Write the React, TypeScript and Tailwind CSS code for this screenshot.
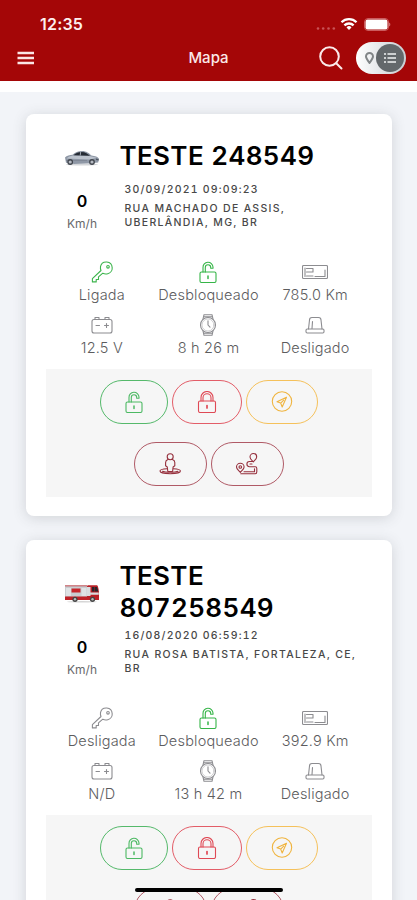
import type { ReactNode } from "react";

type Vehicle = {
  name: string;
  kind: "car" | "truck";
  speed: number;
  date: string;
  address: string;
  ignition: boolean;
  odometer: string;
  battery: string;
  hours: string;
};

const vehicles: Vehicle[] = [
  {
    name: "TESTE 248549",
    kind: "car",
    speed: 0,
    date: "30/09/2021 09:09:23",
    address: "RUA MACHADO DE ASSIS, UBERLÂNDIA, MG, BR",
    ignition: true,
    odometer: "785.0 Km",
    battery: "12.5 V",
    hours: "8 h 26 m",
  },
  {
    name: "TESTE 807258549",
    kind: "truck",
    speed: 0,
    date: "16/08/2020 06:59:12",
    address: "RUA ROSA BATISTA, FORTALEZA, CE, BR",
    ignition: false,
    odometer: "392.9 Km",
    battery: "N/D",
    hours: "13 h 42 m",
  },
];

function Icon({ children, className = "" }: { children: ReactNode; className?: string }) {
  return (
    <svg
      width={26}
      height={22}
      viewBox="0 0 26 22"
      fill="none"
      stroke="currentColor"
      strokeWidth={1.1}
      strokeLinecap="round"
      strokeLinejoin="round"
      className={className}
    >
      {children}
    </svg>
  );
}

function KeyIcon({ className }: { className?: string }) {
  return (
    <Icon className={className}>
      <path d="M12 9.500 3.400 17.600v3.300h3.800v-2.400h2.300v-2.600l4.300-3.700c1.300.7 3.300.9 5 .5 2.600-.6 4.600-3.200 4.400-6C23 3.400 20.800 1.200 17.800 1c-3.200-.2-5.800 1.800-6.300 4.700-.2 1.400 0 2.700.5 3.800Z" />
      <circle cx="19" cy="5.800" r="1.300" />
    </Icon>
  );
}

function UnlockIcon({ className }: { className?: string }) {
  return (
    <Icon className={className}>
      <rect x="5" y="11" width="16" height="10.500" rx="1.500" />
      <path d="M8 11V6.500a5 5 0 0 1 10-.5v1.300h-2.300V6.500a2.700 2.700 0 0 0-5.400 0V11" />
      <path d="M13 15v2.500" strokeWidth="1.500" />
    </Icon>
  );
}

function LockIcon() {
  return (
    <Icon>
      <rect x="4.500" y="10" width="17" height="11.500" rx="1.500" />
      <path d="M7 10V6.500a6 6 0 0 1 12 0V10M9 10V6.800a4 4 0 0 1 8 0V10" />
      <path d="M13 14.500v2.500" strokeWidth="1.700" />
    </Icon>
  );
}

function OdometerIcon() {
  return (
    <Icon>
      <rect x=".5" y="4.500" width="25" height="13" rx="1" />
      <path d="M3 7v8.500M4.500 7.500h6.500v3.500H4.500M4.500 15h6.500M13 15.500h10V9" />
    </Icon>
  );
}

function BatteryIcon() {
  return (
    <Icon>
      <rect x="3" y="5.500" width="20" height="13.500" rx="2" />
      <path d="M6 5.500v-2h4v2M16 5.500v-2h4v2M7 11.500h3.500M15.500 11.500h4M17.500 9.500v4" />
    </Icon>
  );
}

function WatchIcon() {
  return (
    <Icon>
      <circle cx="13" cy="11" r="7.500" />
      <circle cx="13" cy="11" r="6" strokeWidth=".4" />
      <path d="M8 5 9 .7h8L18 5M8 17l1 4.300h8l1-4.300M9 2.700h8M9 19.300h8M13 6.800V11l2 2.200" />
    </Icon>
  );
}

function SirenIcon() {
  return (
    <Icon>
      <path d="M6.500 15 7.500 6a2.500 2.500 0 0 1 2.500-2.500h6.500A2.500 2.500 0 0 1 19 6l1 9M10 14.500l.5-7" />
      <rect x="4" y="15" width="18" height="4" rx="1.200" />
    </Icon>
  );
}

function NavigateIcon() {
  return (
    <Icon>
      <circle cx="13" cy="10.500" r="9.700" />
      <path d="m17.500 6.300-9.500 4.500 3.700 1.300 1.500 3.900 4.300-9.700Zm-5.800 5.800 3-3" />
    </Icon>
  );
}

function StreetViewIcon() {
  return (
    <Icon>
      <circle cx="13.200" cy="3.800" r="3" />
      <path d="M11 6.500C9.300 7 8.600 8 8.600 9.500v3.300l1.700 1.200.5 4.500h4.800l.5-4.500 1.700-1.200V9.500c0-1.500-.7-2.500-2.400-3" />
      <path d="M10 15.800c-4 .2-7 .9-7 2.200 0 1.400 4.500 2.700 10.200 2.700s10.200-1.300 10.200-2.700c0-1.300-3-2-7-2.200" />
      <path d="M5.500 18.300c3 1.300 12.500 1.300 15.500 0" />
    </Icon>
  );
}

function RouteIcon() {
  return (
    <Icon>
      <path d="M6.300 19.500C4 16.900 2.500 15.800 2.500 14a3.800 3.800 0 0 1 7.600 0c0 1.800-1.500 2.900-3.800 5.500Z" />
      <circle cx="6.300" cy="14" r="1.300" />
      <path d="M19.300 8.800c-2-2-3.300-3-3.300-4.900a3.300 3.300 0 0 1 6.700 0c0 1.900-1.400 2.900-3.400 4.900Z" />
      <path d="M18.500 8.500h-3a2.600 2.600 0 0 0 0 5.200h5.800c1 0 1.500.7 1.500 1.700v3.300c0 1.200-.5 2-1.500 2H6.800M18 11h-2M10 18.800h10.500v-3" />
    </Icon>
  );
}

function Car() {
  return (
    <svg width={36} height={18} viewBox="0 0 36 18">
      <ellipse cx="18" cy="15.500" rx="16" ry="1" fill="#d5d7da" />
      <path d="M1 8.500C2.500 6.500 6 6.300 8.500 5.800 11 3.300 14 2 18 2c4.500 0 7 2.300 9.500 4.500 3.500.6 6.500 1.300 7.500 3.300l-.8 3.700-7 .8-17 .7L2 13.800 1 8.500Z" fill="#8f98a6" />
      <path d="M9 6.500 25 7l8 1.800-7.500 1.700-23-1C4 7.800 6.500 7.200 9 6.500Z" fill="#bcc3cd" />
      <path d="M9.500 6.200C12 3.800 14.500 2.900 17.500 2.900c4 0 6.300 1.800 8.500 3.900L9.500 6.200Z" fill="#252b34" />
      <path d="m16.700 2.900-.5 3.600" stroke="#aeb5bf" strokeWidth=".9" />
      <path d="M2 11.500h21" stroke="#757e8c" strokeWidth=".6" />
      <circle cx="6.200" cy="13" r="2.900" fill="#40454d" />
      <circle cx="6.200" cy="13" r="1.600" fill="#b6bbc3" />
      <circle cx="28" cy="13" r="2.900" fill="#40454d" />
      <circle cx="28" cy="13" r="1.600" fill="#b6bbc3" />
      <path d="m32 9.500 2.700.7v1.400L32 11Z" fill="#505864" />
    </svg>
  );
}

function FireTruck() {
  return (
    <svg width={36} height={18} viewBox="0 0 36 18">
      <ellipse cx="18" cy="16.700" rx="15" ry=".8" fill="#d5d5d5" />
      <path d="M1 .5h22V14H1z" fill="#c9cdd0" />
      <path d="M1 .5h22v.7H1zM1 11.500h34V15H1z" fill="#bf2228" />
      <path d="M7.500 3.500h9v4h-9z" fill="#c8272c" />
      <path d="M2 3h5v8H2zM17.500 3h5v8h-5z" fill="#dfe2e4" />
      <path d="M23 1.500c0-.8.700-1.200 1.500-1.200H33c1 0 1.800 4.700 2 7.500v4.500H23V1.500Z" fill="#b91f26" />
      <path d="M23 2h3.500v9H23zM26 7.500h8.800v2.300H26z" fill="#d9dcde" />
      <path d="M28 2h2.500v4.500H28zM31 2h2l1.300 4.600H31z" fill="#29272d" />
      <circle cx="11" cy="14.300" r="2.600" fill="#444" />
      <circle cx="11" cy="14.300" r="1.200" fill="#bbb" />
      <circle cx="28.500" cy="14.300" r="2.600" fill="#444" />
      <circle cx="28.500" cy="14.300" r="1.200" fill="#bbb" />
    </svg>
  );
}

function Stat({ icon, label }: { icon: ReactNode; label: string }) {
  return (
    <div className="flex flex-col items-center text-[#8c8c90]">
      {icon}
      <span className="mt-[3px] whitespace-nowrap text-[14.500px] leading-[18px] font-light tracking-[0.200px] text-[#5c5c5e]">
        {label}
      </span>
    </div>
  );
}

function VehicleCard({ vehicle }: { vehicle: Vehicle }) {
  const button = "flex h-[44px] items-center justify-center rounded-full border";
  return (
    <article className="rounded-lg bg-white px-5 pt-5 pb-[19px] shadow-[0_2px_14px_rgba(60,64,70,0.180)]">
      <div className="flex min-h-[44px] items-center">
        <div className="flex w-[73px] justify-center pt-1">
          {vehicle.kind === "car" ? <Car /> : <FireTruck />}
        </div>
        <h2 className="w-[215px] pl-px text-[26px] leading-8 font-semibold tracking-[0.350px] text-black tabular-nums">
          {vehicle.name}
        </h2>
      </div>
      <div className="flex h-[83px]">
        <div className="flex w-[73px] flex-col items-center pt-[14px]">
          <span className="text-[16px] leading-[18px] font-semibold text-black">{vehicle.speed}</span>
          <span className="mt-[5px] text-[12px] leading-[18px] text-[#68686a]">Km/h</span>
        </div>
        <div className="w-[248px] pt-[5px] pl-[6px] text-[10.500px] leading-[14.500px] font-medium text-[#484848]">
          <p className="mb-[4px] tracking-[1.200px] tabular-nums">{vehicle.date}</p>
          <p className="tracking-[1.320px]">{vehicle.address}</p>
        </div>
      </div>
      <div className="mr-[3px] ml-[3px] grid h-[108px] auto-rows-[53px] grid-cols-3">
        <Stat
          icon={<KeyIcon className={vehicle.ignition ? "text-[#3cb44c]" : ""} />}
          label={vehicle.ignition ? "Ligada" : "Desligada"}
        />
        <Stat icon={<UnlockIcon className="text-[#36b548]" />} label="Desbloqueado" />
        <Stat icon={<OdometerIcon />} label={vehicle.odometer} />
        <Stat icon={<BatteryIcon />} label={vehicle.battery} />
        <Stat icon={<WatchIcon />} label={vehicle.hours} />
        <Stat icon={<SirenIcon />} label="Desligado" />
      </div>
      <div className="h-[128px] bg-[#f6f6f6] pt-[11px]">
        <div className="flex justify-center gap-[4px]">
          <button className={`${button} w-[68px] border-[#55b96b] text-[#4cb963]`}>
            <UnlockIcon />
          </button>
          <button className={`${button} w-[70px] border-[#e35d68] text-[#df4955]`}>
            <LockIcon />
          </button>
          <button className={`${button} w-[72px] border-[#f5c15b] text-[#f0b43e]`}>
            <NavigateIcon />
          </button>
        </div>
        <div className="mt-[17.500px] flex justify-center gap-[4px]">
          <button className={`${button} w-[73px] border-[#b05a66] text-[#96303d]`}>
            <StreetViewIcon />
          </button>
          <button className={`${button} w-[73px] border-[#b05a66] text-[#96303d]`}>
            <RouteIcon />
          </button>
        </div>
      </div>
    </article>
  );
}

function Header() {
  return (
    <header className="h-[81px] bg-[#a40607] text-white">
      <div className="flex h-[36px] items-center justify-between pt-[12px] pr-[26px] pl-[40px]">
        <span className="text-[16px] font-semibold tracking-[0.200px] text-[#fdeeee]">12:35</span>
        <div className="flex items-center">
          <svg width={20} height={14} viewBox="0 0 20 14" fill="#c95356">
            <circle cx="2" cy="11.500" r="1.300" />
            <circle cx="7.200" cy="11.500" r="1.300" />
            <circle cx="12.500" cy="11.500" r="1.300" />
            <circle cx="17.800" cy="11.500" r="1.300" />
          </svg>
          <svg width={18} height={14} viewBox="0 0 18 14" fill="none" stroke="white" strokeWidth={2.300} className="ml-[4px]">
            <path d="M1.500 5.300a10.600 10.600 0 0 1 15 0M4.400 8.400a6.500 6.500 0 0 1 9.200 0" />
            <path d="m9 12.900-2.500-2.500a3.500 3.500 0 0 1 5 0L9 12.900Z" fill="white" stroke="none" />
          </svg>
          <svg width={27} height={13} viewBox="0 0 27 13" className="ml-[6px]">
            <rect x=".5" y=".5" width="24" height="12" rx="3.500" fill="none" stroke="#cb5c5e" />
            <rect x="1.500" y="1.500" width="22" height="10" rx="2.200" fill="white" />
            <path d="M25.200 4.500c1.500.5 1.500 3.500 0 4Z" fill="#d88081" />
          </svg>
        </div>
      </div>
      <div className="flex h-[43px] items-center justify-between pr-[11px] pl-[17px]">
        <svg width={81} height={14} viewBox="0 0 81 14" stroke="#fae6e6" strokeWidth={2.600}>
          <path d="M.5 2h16.500M.5 7h16.500M.5 12h16.500" />
        </svg>
        <h1 className="pt-[2px] text-[15px] font-medium text-[#fae8e8]">Mapa</h1>
        <div className="flex items-center">
          <svg width={24} height={24} viewBox="0 0 24 24" fill="none" stroke="#fbe9e9" strokeWidth={2} strokeLinecap="round">
            <circle cx="10.500" cy="10.500" r="9.300" />
            <path d="m17.200 17.200 5.300 5.300" />
          </svg>
          <div className="ml-[13px] flex h-[32px] w-[50px] items-center justify-between rounded-full bg-linear-to-r from-white to-[#c9cdd2] pr-[2px] pl-[9px]">
            <svg width={9} height={12} viewBox="0 0 9 12" fill="none" stroke="#818587" strokeWidth={2}>
              <path d="M4.500 10.800C2 7.500 1 6 1 4.500a3.500 3.500 0 0 1 7 0c0 1.500-1 3-3.500 6.300Z" />
            </svg>
            <div className="flex h-[28px] w-[28px] items-center justify-center rounded-full bg-[#63686b]">
              <svg width={14} height={12} viewBox="0 0 14 12" stroke="#f1f2f3" strokeWidth={1.500}>
                <path d="M4.500 2H13M4.500 6H13M4.500 10H13M1 2h2M1 6h2M1 10h2" />
              </svg>
            </div>
          </div>
        </div>
      </div>
    </header>
  );
}

export default function App() {
  return (
    <div className="h-[900px] overflow-hidden bg-[#f2f4f8] font-[Inter,sans-serif]">
      <Header />
      <div className="h-[11px] bg-white" />
      <main className="flex flex-col gap-6 px-[25.500px] pt-[22px]">
        {vehicles.map((vehicle) => (
          <VehicleCard key={vehicle.name} vehicle={vehicle} />
        ))}
      </main>
      <div className="fixed bottom-[8px] left-[135px] h-[4px] w-[148px] rounded-full bg-black" />
    </div>
  );
}
